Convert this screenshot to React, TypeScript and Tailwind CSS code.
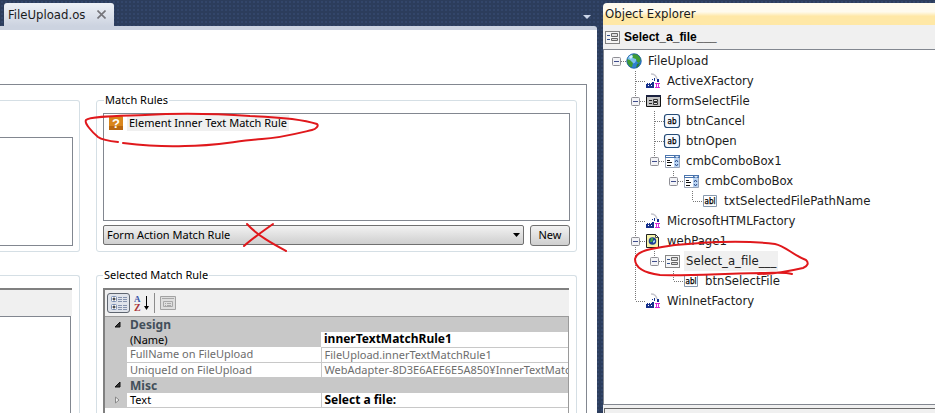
import type { ReactNode } from "react";

type IconName = "globe" | "factory" | "form" | "button" | "combo" | "text" | "page" | "group";

interface TreeNode {
  label: string;
  icon: IconName;
  // one character per column: "|" line, "+" branch, "L" last branch, "-" root
  guides: string;
  open?: boolean;
  selected?: boolean;
}

const nodes: TreeNode[] = [
  { label: "FileUpload", icon: "globe", guides: "-", open: true },
  { label: "ActiveXFactory", icon: "factory", guides: " +" },
  { label: "formSelectFile", icon: "form", guides: " +", open: true },
  { label: "btnCancel", icon: "button", guides: " |+" },
  { label: "btnOpen", icon: "button", guides: " |+" },
  { label: "cmbComboBox1", icon: "combo", guides: " |L", open: true },
  { label: "cmbComboBox", icon: "combo", guides: " | L", open: true },
  { label: "txtSelectedFilePathName", icon: "text", guides: " |  L" },
  { label: "MicrosoftHTMLFactory", icon: "factory", guides: " +" },
  { label: "webPage1", icon: "page", guides: " +", open: true },
  { label: "Select_a_file___", icon: "group", guides: " |L", open: true, selected: true },
  { label: "btnSelectFile", icon: "text", guides: " | L" },
  { label: "WinInetFactory", icon: "factory", guides: " L" },
];

const iconArt: Record<IconName, ReactNode> = {
  globe: (
    <>
      <circle cx="8" cy="8" r="7.5" fill="#2f7fd0" />
      <circle cx="6" cy="6" r="4.5" fill="#7cc0ee" />
      <path d="M7 1l4 0 3 3 1 3-2 3-2-1-1-3-3-1-1-2z" fill="#3f9d35" />
      <path d="M1 6l3 1 3 3-1 4-2 0-3-4z" fill="#3f9d35" />
      <path d="M11 11l3-1-2 4-2 1z" fill="#2d7f2c" />
      <path d="M3 4l2-2 2 1-2 3z" fill="#d5f0fb" />
      <circle cx="8" cy="8" r="7.2" fill="none" stroke="#235f9e" strokeWidth=".7" />
    </>
  ),
  factory: (
    <>
      <path d="M6 1q5 0 6 5" fill="none" stroke="#c4c4cc" strokeWidth="1.500" />
      <path d="M1 15v-4h1v-1h1v1h1v-1h1v1h1v-1h1V9h2v6z" fill="#15308c" />
      <path d="M9 5h1v3H9zM12 6h2v3h-2zM7 6h1v1H7z" fill="#15308c" />
      <path d="M3 12h1v1H3zM6 12h1v1H6z" fill="#fff" />
      <path d="M10 10h5v1h-1v3h1v1h-5v-1h1v-3h-1zM12 11v3h1v-3z" fill="#d829d8" />
    </>
  ),
  form: (
    <>
      <path d="M1.500 2.500h14v11h-14z" fill="#c4c4c4" stroke="#111" />
      <path d="M1 2h15v2H1z" fill="#1b2240" />
      <path d="M4 7h3v1H4zM4 10h3v1H4z" fill="#222" />
      <path d="M8.500 6.500h4v2h-4zM8.500 9.500h4v2h-4z" fill="#e6e6e6" stroke="#333" />
    </>
  ),
  button: (
    <>
      <rect x="0.500" y="1.500" width="15" height="13" rx="2.500" fill="#f4f9ff" stroke="#244a75" strokeWidth="1.200" />
      <text x="8" y="11" textAnchor="middle" className="font-['DejaVu_Sans_Condensed'] text-[8px]" stroke="#000" strokeWidth=".25">ab</text>
    </>
  ),
  combo: (
    <>
      <path d="M1.500 2.500h14v12h-14z" fill="#fff" stroke="#9aa5b8" />
      <path d="M1 2h15v3H1z" fill="#4a74ad" />
      <path d="M2 3h8v1H2z" fill="#fff" />
      <path d="M11 3h4l-2 2z" fill="#dfeaf8" />
      <path d="M10 5h5v9h-5z" fill="#bcd6f5" />
      <path d="M11 9l1.500-2L14 9M11 11l1.500 2 1.500-2" fill="none" stroke="#2b4b86" />
      <path d="M3 7h3v1H3zM3 9h5v1H3zM3 12h4v1H3z" fill="#111" />
    </>
  ),
  text: (
    <>
      <path d="M1.500 2.500h13v11h-13z" fill="#fff" stroke="#8698ad" />
      <text x="8" y="11" textAnchor="middle" className="font-['DejaVu_Sans_Condensed'] text-[8px]" stroke="#000" strokeWidth=".25">abl</text>
    </>
  ),
  page: (
    <>
      <path d="M1.500 1.500h9l3 3v10h-12z" fill="#f6f3a8" stroke="#222" />
      <path d="M10.500 1.500v3h3z" fill="#fff" stroke="#222" strokeWidth=".8" />
      <circle cx="7.500" cy="8" r="3.800" fill="#1d3f95" />
      <path d="M6 5l2 0 0 2-1 2-2 0z" fill="#41a741" />
      <path d="M8 8l2-1 0 2-2 1z" fill="#9fd3f2" />
    </>
  ),
  group: (
    <>
      <path d="M1.500 2.500h14v12h-14z" fill="#f6f6f6" stroke="#111" strokeDasharray="1 1" />
      <path d="M3 6h3v1H3zM3 10h3v1H3z" fill="#34508c" />
      <path d="M7.500 4.500h6v3h-6zM7.500 9.500h6v2h-6z" fill="#ddd" stroke="#666" />
    </>
  ),
};

const Icon = ({ name }: { name: IconName }) => (
  <svg width="16" height="16" viewBox="0 0 16 16" className="shrink-0 overflow-visible">
    {iconArt[name]}
  </svg>
);

const Guide = ({ kind, toggle }: { kind: string; toggle: boolean }) => (
  <svg width="19" height="20" viewBox="0 0 19 20" className="shrink-0">
    <g stroke="#777" strokeDasharray="1 1">
      {(kind === "|" || kind === "+") && <path d="M9.500 0v20" />}
      {kind === "L" && <path d="M9.500 0v10" />}
      {"+L-".includes(kind) && <path d="M10 10.500h9" />}
    </g>
    {toggle && (
      <>
        <rect x="5.500" y="6.500" width="8" height="8" rx="1" fill="#f3f3f6" stroke="#8f8f95" />
        <path d="M7 10.500h5" stroke="#3e4c8c" />
      </>
    )}
  </svg>
);

const ObjectExplorer = () => (
  <aside className="flex w-[332px] shrink-0 flex-col font-['DejaVu_Sans_Condensed',sans-serif] text-[13px]">
    <h2 className="h-[22px] rounded-tl-sm bg-linear-to-b from-[#fffbee] from-40% to-[#ffe8a6] to-60% pl-[2px] leading-[22px] text-[#1b1b1b]">
      Object Explorer
    </h2>
    <div className="flex h-6 items-center gap-1 bg-[#f0f0f0] pl-px">
      <Icon name="group" />
      <span className="font-['Liberation_Sans',sans-serif] text-xs font-bold text-black">Select_a_file___</span>
    </div>
    <ul role="tree" className="flex-1 border-y border-l border-[#828790] bg-white pt-px pl-[3px] text-[#1c1c1c]">
      {nodes.map((node) => (
        <li key={node.label} role="treeitem" aria-selected={!!node.selected} className="flex h-5 items-center">
          {node.guides.split("").map((kind, i) => (
            <Guide key={i} kind={kind} toggle={!!node.open && i === node.guides.length - 1} />
          ))}
          <Icon name={node.icon} />
          <span className={node.selected ? "ml-1 bg-[#f0f0f0] px-[2px] leading-5" : "ml-1 px-[2px] leading-5"}>
            {node.label}
          </span>
        </li>
      ))}
    </ul>
    <div className="flex h-2 flex-col bg-[#f0f0f0] pt-[3px] pl-px">
      <div className="flex-1 border-t border-l border-[#696969]" />
    </div>
  </aside>
);

const MatchRules = () => (
  <fieldset className="min-w-0 rounded-[3px] border border-[#d5dfe5] px-[6px] pb-[5px]">
    <legend className="ml-px h-[14px] px-px leading-[14px]">Match Rules</legend>
    <ul className="mt-[6px] h-[108px] border border-[#828790] bg-white">
      <li className="flex h-[18px] items-center gap-1 pl-[5px]">
        <svg width="14" height="14" viewBox="0 0 14 14">
          <rect width="14" height="14" rx="1" fill="#d9861c" />
          <path d="M0 10h14v4H0z" fill="#b96710" />
          <text x="7" y="12" textAnchor="middle" fill="#fff" className="font-['Liberation_Sans'] text-[13px] font-bold">?</text>
        </svg>
        <span className="bg-[#f0f0f0] px-[2px] leading-4">Element Inner Text Match Rule</span>
      </li>
    </ul>
    <div className="mt-[4px] flex gap-[6px]">
      <div className="relative flex-1">
        <select
          aria-label="Match rule type"
          className="block h-[20px] w-full appearance-none rounded-[2px] border border-[#707070] bg-linear-to-b from-[#f2f2f2] to-[#cfcfcf] pl-[3px] leading-[18px]"
        >
          <option>Form Action Match Rule</option>
        </select>
        <svg width="7" height="4" viewBox="0 0 7 4" className="pointer-events-none absolute top-2 right-1">
          <path d="M0 0h7L3.500 4z" />
        </svg>
      </div>
      <button className="h-[21px] w-10 rounded-[3px] border border-[#707070] bg-linear-to-b from-[#f2f2f2] to-[#cfcfcf]">
        New
      </button>
    </div>
  </fieldset>
);

const Expander = () => (
  <svg width="7" height="7" viewBox="0 0 7 7" className="ml-[9px]">
    <path d="M6 1v5H1z" fill="#333" stroke="#111" />
  </svg>
);

const Category = ({ name }: { name: string }) => (
  <tr className="h-[15px] bg-[#c8c8c8]">
    <td>
      <Expander />
    </td>
    <th colSpan={2} className="pl-[3px] text-left text-xs leading-[15px] font-bold text-[#434f5a]">
      {name}
    </th>
  </tr>
);

const properties = [
  { name: "FullName on FileUpload", value: "FileUpload.innerTextMatchRule1" },
  { name: "UniqueId on FileUpload", value: "WebAdapter-8D3E6AEE6E5A850¥InnerTextMatchRule1" },
];

const SelectedRule = () => (
  <fieldset className="flex min-w-0 flex-1 flex-col rounded-t-[3px] border border-b-0 border-[#d5dfe5] pr-[7px] pl-[6px]">
    <legend className="h-[14px] px-px leading-[14px]">Selected Match Rule</legend>
    <div className="mt-[6px] flex flex-1 flex-col border-t-2 border-l-2 border-[#808080]">
      <div className="flex h-[26px] items-center gap-1 bg-[#f0f0f0] pl-[2px]">
        <button aria-label="Categorized" className="flex h-[20px] w-[23px] items-center justify-center rounded-[3px] border border-[#5f6670] bg-[#dfe3ea]">
          <svg width="18" height="16" viewBox="0 0 18 16">
            <rect x="1.500" y="1.500" width="5" height="5" rx="1" fill="#fff" stroke="#7a8fb5" />
            <rect x="1.500" y="9.500" width="5" height="5" rx="1" fill="#fff" stroke="#7a8fb5" />
            <path d="M2.500 4h3M4 2.500v3M2.500 12h3M4 10.500v3" stroke="#111" />
            <path d="M8 2.500h4M13 2.500h4M8 4.500h4M13 4.500h4M8 6.500h4M13 6.500h4M8 10.500h4M13 10.500h4M8 12.500h4M13 12.500h4M8 14.500h4M13 14.500h4" stroke="#8492ad" />
          </svg>
        </button>
        <button aria-label="Alphabetical">
          <svg width="15" height="18" viewBox="0 0 15 18">
            <text x="0" y="8" fill="#3a56a8" className="font-['Liberation_Serif'] text-[9px] font-bold">A</text>
            <text x="0" y="17" fill="#a8343a" className="font-['Liberation_Serif'] text-[10px] font-bold">Z</text>
            <path d="M12.500 2v13" stroke="#000" />
            <path d="M10 12h5l-2.500 4z" />
          </svg>
        </button>
        <div className="mx-px h-5 w-px bg-[#8c8c8c]" />
        <button aria-label="Property pages" disabled>
          <svg width="16" height="16" viewBox="0 0 16 16">
            <path d="M.5 1.500h15v13H.5z" fill="#dedede" stroke="#a2a2a2" />
            <path d="M2 3.500h12M3.500 6.500h9v5h-9zM5 8.500h1M7 8.500h4M5 10.500h1M7 10.500h4" fill="none" stroke="#a8a8a8" />
          </svg>
        </button>
      </div>
      <div className="flex-1 border-t border-r border-[#9a9a9a]">
        <table className="w-full table-fixed border-collapse text-left [&_td]:p-0 [&_td]:leading-[14px] [&_td]:whitespace-nowrap">
          <colgroup>
            <col className="w-[22px]" />
            <col className="w-[194px]" />
            <col />
          </colgroup>
          <tbody>
            <Category name="Design" />
            <tr className="h-[15px]">
              <td className="bg-[#c8c8c8]" />
              <td className="bg-[#c8c8c8]"><span className="pl-[3px]">(Name)</span></td>
              <td className="border-b border-[#c8c8c8] text-xs font-bold"><span className="pl-[3px]">innerTextMatchRule1</span></td>
            </tr>
            {properties.map((p) => (
              <tr key={p.name} className="h-[15px] text-[#6d6d6d]">
                <td className="bg-[#c8c8c8]" />
                <td className="border-r border-b border-[#c8c8c8]"><span className="pl-[3px]">{p.name}</span></td>
                <td className="overflow-hidden border-b border-[#c8c8c8]"><span className="pl-[3px]">{p.value}</span></td>
              </tr>
            ))}
            <Category name="Misc" />
            <tr className="h-[15px]">
              <td className="bg-[#c8c8c8]">
                <svg width="7" height="8" viewBox="0 0 7 8" className="ml-[9px]">
                  <path d="M1.500 1v6L5 4z" fill="#eee" stroke="#888" />
                </svg>
              </td>
              <td className="border-r border-b border-[#c8c8c8]"><span className="pl-[3px]">Text</span></td>
              <td className="border-b border-[#c8c8c8] text-xs font-bold"><span className="pl-[3px]">Select a file:</span></td>
            </tr>
          </tbody>
        </table>
      </div>
    </div>
  </fieldset>
);

const Editor = () => (
  <main className="flex min-w-0 flex-1 flex-col">
    <div className="flex h-[23px] items-center justify-between pr-[6px] pl-1">
      <div className="flex h-full items-center gap-3 rounded-t-[3px] bg-linear-to-b from-[#eef1f6] to-[#ccd3e0] pr-2 pl-1 font-['DejaVu_Sans_Condensed',sans-serif] text-[13px] text-[#1b1b1b]">
        FileUpload.os
        <button aria-label="Close">
          <svg width="9" height="9" viewBox="0 0 9 9" stroke="#75757a" strokeWidth="1.600">
            <path d="M.5.5l8 8M8.500.5l-8 8" />
          </svg>
        </button>
      </div>
      <button aria-label="Open documents" className="pt-1">
        <svg width="8" height="4" viewBox="0 0 8 4" fill="#ccd6e8">
          <path d="M0 0h8L4 4z" />
        </svg>
      </button>
    </div>
    <div className="flex flex-1 flex-col rounded-tr-[3px] border-t-4 border-[#ccd3e0] bg-white pt-[54px] pr-[10px] font-['Noto_Sans',sans-serif] text-[11px] text-black">
      <div className="flex flex-1 gap-4 border-t border-r border-[#828790] pt-2 pr-[9px]">
        <div className="flex w-20 shrink-0 flex-col gap-[23px] pt-[7px]">
          <div className="flex h-[152px] flex-col rounded-r-[3px] border border-l-0 border-[#d5dfe5] pt-9 pr-[6px] pb-[5px]">
            <div className="flex-1 border border-l-0 border-[#828790]" />
          </div>
          <div className="flex flex-1 flex-col rounded-tr-[3px] border-t border-r border-[#d5dfe5] pt-3 pr-[7px]">
            <div className="h-[28px] border-t-2 border-[#808080] bg-[#f0f0f0]" />
            <div className="mr-px flex-1 border-t border-r border-[#828790]" />
          </div>
        </div>
        <div className="flex min-w-0 flex-1 flex-col gap-4">
          <MatchRules />
          <SelectedRule />
        </div>
      </div>
    </div>
  </main>
);

// Red pen marks over the window
const PenMarks = () => (
  <svg
    width="935"
    height="413"
    viewBox="0 0 935 413"
    fill="none"
    stroke="#e0181c"
    strokeWidth="2"
    strokeLinecap="round"
    className="pointer-events-none absolute top-0 left-0"
  >
    <path d="M118 142C108 141 102 140 98 137C92 132 84 123 86 120C90 116 120 116 145 115C180 113 220 114 250 116C280 117 305 120 317 124C319 126 316 129 312 130C295 134 280 138 262 139C235 141 215 146 185 146C165 147 140 145 123 143" />
    <path d="M247 224C258 236 273 244 286 251M273 224C262 232 253 238 244 246" />
    <path d="M792 274C785 272 775 273 765 273C730 273 690 276 660 275C645 273 635 268 635 259C636 250 655 248 675 245C705 242 745 240 775 244C785 246 793 255 806 260C809 263 808 266 803 268C790 271 775 274 758 274" />
  </svg>
);

const App = () => {
  return (
    <div className="relative flex h-screen gap-[6px] overflow-hidden bg-[#2c3d5c] bg-[radial-gradient(#33466a_1px,transparent_1px)] bg-size-[4px_4px] pt-[3px]">
      <Editor />
      <ObjectExplorer />
      <PenMarks />
    </div>
  );
};

export default App;
